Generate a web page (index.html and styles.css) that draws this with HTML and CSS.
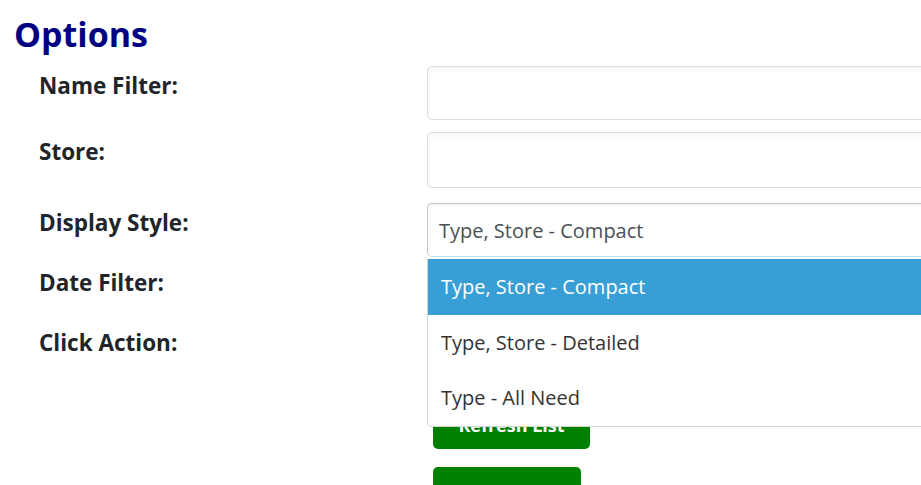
FILE: index.html
```html
<!DOCTYPE html>
<html lang="en">
<head>
    <meta charset="UTF-8">
    <meta name="viewport" content="width=device-width, initial-scale=1.0">
	<link rel="stylesheet" href="styles.css">
</head>
<body>
<div class="page">
	<h1 class="title">Options</h1>
	<div class="form">
		<div class="row row-name">
			<label>Name Filter:</label>
			<input type="text" class="field">
		</div>
		<div class="row row-store">
			<label>Store:</label>
			<input type="text" class="field tall">
		</div>
		<div class="row row-display">
			<label>Display Style:</label>
			<div class="picker">
				<div class="select">Type, Store - Compact</div>
				<ul class="menu">
					<li class="active">Type, Store - Compact</li>
					<li>Type, Store - Detailed</li>
					<li>Type - All Need</li>
				</ul>
			</div>
		</div>
		<div class="row row-short">
			<label>Date Filter:</label>
			<input type="text" class="field short">
		</div>
		<div class="row row-short">
			<label>Click Action:</label>
			<input type="text" class="field short">
		</div>
		<div class="actions">
			<button class="btn btn-refresh">Refresh List</button>
			<button class="btn btn-clear">Clear Filters</button>
		</div>
	</div>
</div>
</body>
</html>
```

FILE: styles.css
```css
html, body{
	margin:0;
	padding:0;
	overflow:hidden;
	background:#fff;
}
body{
	font-family:"Open Sans", "Noto Sans", sans-serif;
	color:#212529;
}
.page{
	padding:14px 0 0 14px;
}
.title{
	margin:0;
	font-size:34px;
	line-height:40px;
	font-weight:bold;
	color:#000080;
}
.form{
	margin-top:12px;
	padding-left:25px;
}
.row{
	display:grid;
	grid-template-columns:388px 600px;
	align-items:start;
}
.row label{
	font-size:22.5px;
	line-height:38px;
	font-weight:bold;
	padding-top:1px;
}
.row-name{
	margin-bottom:12px;
}
.row-store{
	margin-bottom:15px;
}
.row-display{
	margin-bottom:6px;
}
.row-short{
	height:60px;
}
.field{
	box-sizing:border-box;
	width:100%;
	height:54px;
	margin:0;
	border:1px solid #dcdcdc;
	border-radius:5px;
	box-shadow:inset 0 3px 5px rgba(0,0,0,.04);
	background:#fff;
	font:inherit;
}
.field.tall{
	height:56px;
}
.field.short{
	height:50px;
}
.picker{
	position:relative;
}
.select{
	box-sizing:border-box;
	height:54px;
	line-height:54px;
	padding-left:11px;
	border:1px solid #c4c4c4;
	border-bottom-color:#b9dcee;
	border-radius:5px;
	box-shadow:inset 0 3px 5px rgba(0,0,0,.04);
	font-size:20px;
	color:#495057;
}
.menu{
	position:absolute;
	top:56px;
	left:0;
	right:0;
	z-index:5;
	margin:0;
	padding:0;
	list-style:none;
	background:#fff;
	border:1px solid #d4d4d4;
	border-top:none;
	border-radius:0 0 5px 5px;
}
.menu li{
	height:55.5px;
	line-height:55.5px;
	padding-left:13px;
	font-size:20px;
	color:#333;
}
.menu li.active{
	background:#389fd6;
	color:#fff;
}
.actions{
	margin-left:394px;
	padding-top:18px;
}
.btn{
	display:block;
	height:48px;
	border:none;
	border-radius:5px;
	background:#008000;
	color:#fff;
	font-family:"Open Sans", "Noto Sans", sans-serif;
	font-size:18px;
	font-weight:bold;
	padding:0;
}
.btn-refresh{
	width:157px;
	margin-bottom:18px;
}
/* second button: its label sits below the fold */
.btn-clear{
	width:148px;
	box-sizing:content-box;
	height:auto;
	line-height:1;
	padding:22px 0 10px;
}
```
